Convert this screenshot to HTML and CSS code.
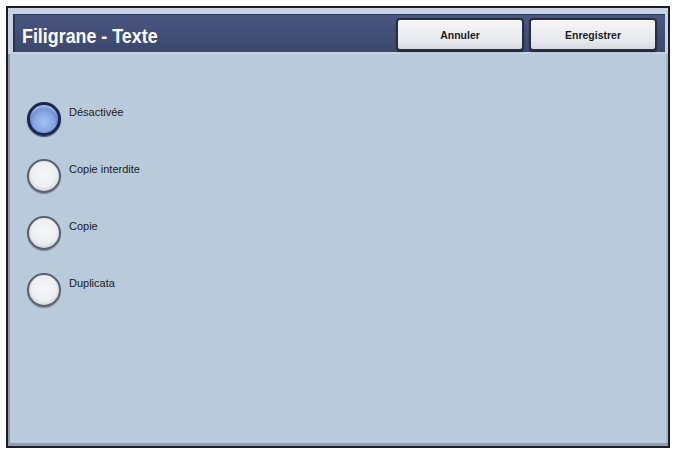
FILE: index.html
```html
<!DOCTYPE html>
<html lang="fr">
<head>
<meta charset="utf-8">
<title>Filigrane - Texte</title>
<link rel="stylesheet" href="styles.css">
</head>
<body>
<div class="frame">
  <div class="top">
    <div class="header">
      <h1 class="title">Filigrane - Texte</h1>
      <div class="actions">
        <button class="btn">Annuler</button>
        <button class="btn">Enregistrer</button>
      </div>
    </div>
  </div>
  <div class="content">
    <ul class="options">
      <li class="option selected"><span class="radio"></span><span class="label">Désactivée</span></li>
      <li class="option"><span class="radio"></span><span class="label">Copie interdite</span></li>
      <li class="option"><span class="radio"></span><span class="label">Copie</span></li>
      <li class="option"><span class="radio"></span><span class="label">Duplicata</span></li>
    </ul>
  </div>
</div>
</body>
</html>
```

FILE: styles.css
```css
html, body {
  margin: 0;
  padding: 0;
  background: #ffffff;
}

body {
  font-family: "Liberation Sans", Arial, sans-serif;
}

.frame {
  margin: 6px 0 0 6px;
  width: 660px;
  height: 438px;
  border: 2px solid #1b1e28;
  background: #b9cadb;
  display: flex;
  flex-direction: column;
  box-shadow: inset 0 -3px 0 #8f9fb2, inset -2px 0 0 #a6b6c8, inset 2px 0 0 #8a9ab0;
}

.top {
  background: #c7d3df;
  padding: 6px 3px 2px 5px;
}

.header {
  height: 38px;
  box-sizing: border-box;
  background: linear-gradient(#4a5680, #3c476e);
  border-left: 2px solid #283150;
  border-top: 1px solid #2f3858;
  display: flex;
  align-items: center;
  justify-content: space-between;
  padding: 1px 8px 0 7px;
}

.title {
  margin: 0;
  color: #ffffff;
  font-family: "Liberation Sans", Arial, sans-serif;
  font-weight: bold;
  font-size: 21px;
  line-height: 24px;
  white-space: nowrap;
  width: 137px;
  transform: scaleX(0.85);
  transform-origin: left center;
  position: relative;
  top: 2px;
}

.actions {
  display: flex;
  gap: 5px;
}

.btn {
  width: 128px;
  height: 33px;
  border: 2px solid #262d45;
  border-radius: 4px;
  background: linear-gradient(#f4f5f6, #e6e9ed 70%, #d6dbe2);
  box-shadow: inset 0 1px 0 #ffffff, 0 1px 1px #1e2438;
  font-family: "Liberation Sans", Arial, sans-serif;
  font-weight: bold;
  font-size: 10.5px;
  color: #1c1c1c;
  padding: 0;
  margin-top: 1px;
}

.content {
  flex: 1;
  padding: 48px 0 0 19px;
}

.options {
  list-style: none;
  margin: 0;
  padding: 0;
  display: flex;
  flex-direction: column;
  gap: 23px;
}

.option {
  display: flex;
  align-items: flex-start;
  gap: 8px;
}

.radio {
  width: 34px;
  height: 34px;
  box-sizing: border-box;
  border-radius: 50%;
  border: 2px solid #5a626f;
  background: radial-gradient(circle at 50% 45%, #f6f7f8 0%, #eceef1 55%, #c9ced6 80%, #8d949f 100%);
  box-shadow: 0 1px 1px #7f8794;
  flex: none;
}

.option.selected .radio {
  border: 3px solid #1b2850;
  background: radial-gradient(circle at 50% 60%, #a4c0f0 0%, #86a6e4 45%, #5e7cc4 75%, #34478a 100%);
  box-shadow: 0 1px 1px #3a4670, inset 0 4px 3px -2px rgba(220, 230, 255, 0.7);
}

.label {
  font-size: 11px;
  line-height: 13px;
  color: #1a1a1a;
  padding-top: 4px;
}
```
